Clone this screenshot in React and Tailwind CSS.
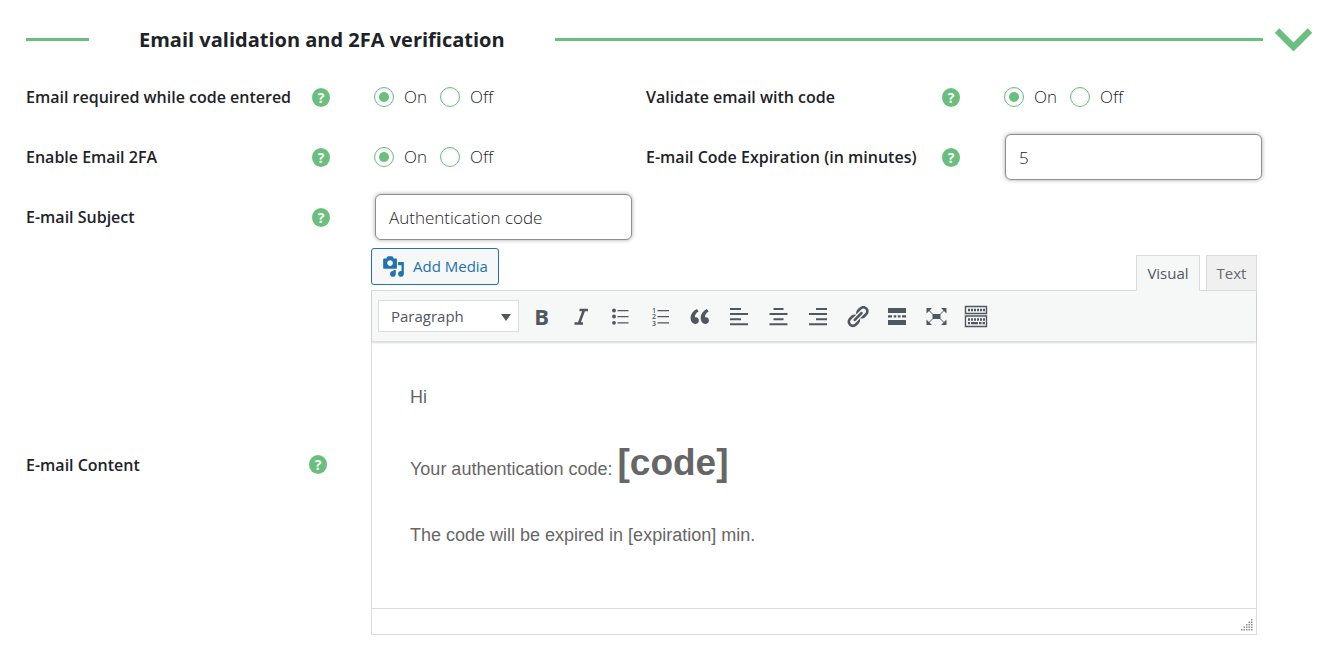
import React, { useState } from "react";

function HelpIcon() {
  return (
    <button type="button" aria-label="Help" className="shrink-0">
      <svg width="18" height="19" viewBox="0 0 18 19" aria-hidden="true">
        <ellipse cx="9" cy="9.5" rx="9" ry="9.5" fill="#6bbf7e" />
        <text x="9" y="14.5" textAnchor="middle" fontSize="14" fontWeight="700" fill="#fff">?</text>
      </svg>
    </button>
  );
}

function Field({ label, htmlFor, children }) {
  return (
    <div className="flex h-[60px] items-center gap-11">
      <div className="flex flex-1 items-center justify-between">
        <label htmlFor={htmlFor} className="text-base font-semibold whitespace-nowrap text-[#1d2327]">
          {label}
        </label>
        <HelpIcon />
      </div>
      <div className="w-[258px] shrink-0">{children}</div>
    </div>
  );
}

function OnOff({ name }) {
  const [value, setValue] = useState("On");

  return (
    <div role="radiogroup" className="flex gap-[13px]">
      {["On", "Off"].map((option) => (
        <label key={option} className="flex items-center gap-2.5 text-[17px] leading-5 font-light text-[#1d2327]">
          <input
            id={option === "On" ? name : undefined}
            type="radio"
            name={name}
            checked={value === option}
            onChange={() => setValue(option)}
            className="flex size-5 appearance-none items-center justify-center rounded-full border border-[#6bbf7e] bg-white shadow-[inset_0_1px_2px_rgba(0,0,0,0.1)] checked:before:size-2.5 checked:before:rounded-full checked:before:bg-[#6bbf7e]"
          />
          {option}
        </label>
      ))}
    </div>
  );
}

function TextBox({ id, defaultValue }) {
  return (
    <input
      id={id}
      type="text"
      defaultValue={defaultValue}
      className="ml-px block h-[46px] w-[257px] rounded-md border border-[#8c8f94] bg-white px-[13px] text-[17px] font-light text-[#1d2327] shadow-[0_0_4px_rgba(0,0,0,0.35)]"
    />
  );
}

function Icon({ children, viewBox = "0 0 25 25" }) {
  return (
    <svg width="25" height="25" viewBox={viewBox} fill="currentColor" aria-hidden="true">
      {children}
    </svg>
  );
}

const tools = [
  { label: "Bold", icon: <span className="text-[22px] leading-6 font-bold">B</span> },
  {
    label: "Italic",
    icon: (
      <Icon>
        <path d="M10.5 6h8.5M5.5 19.5h8.5M15 6l-5 13.5" fill="none" stroke="currentColor" strokeWidth="2.6" />
      </Icon>
    ),
  },
  {
    label: "Bulleted list",
    icon: (
      <Icon>
        <circle cx="6" cy="6.5" r="1.9" />
        <circle cx="6" cy="12.5" r="1.9" />
        <circle cx="6" cy="18.8" r="1.9" />
        <path d="M9.5 6h11v1.3h-11zM9.5 12h11v1.3h-11zM9.5 18.2h11v1.3h-11z" />
      </Icon>
    ),
  },
  {
    label: "Numbered list",
    icon: (
      <Icon>
        <g fontSize="7" fontWeight="600">
          <text x="4" y="8.5">1</text>
          <text x="4" y="15">2</text>
          <text x="4" y="21.5">3</text>
        </g>
        <path d="M9.5 6h11.5v1.3h-11.5zM9.5 12h11.5v1.3h-11.5zM9.5 18.2h11.5v1.3h-11.5z" />
      </Icon>
    ),
  },
  {
    label: "Blockquote",
    icon: (
      <Icon viewBox="0 0 20 20">
        <path d="M9.49 13.22c0-.74-.2-1.38-.61-1.9-.62-.78-1.83-.88-2.53-.72-.29-1.65 1.11-3.75 2.92-4.65L7.88 4c-2.73 1.3-5.42 4.28-4.96 8.05C3.21 14.43 4.59 16 6.54 16c.85 0 1.56-.25 2.12-.75s.83-1.18.83-2.03zm8.05 0c0-.74-.2-1.38-.61-1.9-.63-.78-1.83-.88-2.53-.72-.29-1.65 1.11-3.75 2.92-4.65L15.93 4c-2.73 1.3-5.41 4.28-4.95 8.05.29 2.38 1.66 3.95 3.61 3.95.85 0 1.56-.25 2.12-.75s.83-1.18.83-2.03z" />
      </Icon>
    ),
  },
  {
    label: "Align left",
    icon: (
      <Icon>
        <path d="M3 4h11v2H3zM3 9h18v2H3zM3 14.2h11v2H3zM3 19.2h18v2H3z" />
      </Icon>
    ),
  },
  {
    label: "Align center",
    icon: (
      <Icon>
        <path d="M7.5 4h10v2h-10zM3.5 9h18v2h-18zM7.5 14.2h10v2h-10zM3.5 19.2h18v2h-18z" />
      </Icon>
    ),
  },
  {
    label: "Align right",
    icon: (
      <Icon>
        <path d="M10 4h11v2H10zM3 9h18v2H3zM10 14.2h11v2H10zM3 19.2h18v2H3z" />
      </Icon>
    ),
  },
  {
    label: "Insert link",
    icon: (
      <Icon viewBox="0 0 20 20">
        <path d="M17.74 2.76c1.68 1.69 1.68 4.41 0 6.1l-1.53 1.52c-1.12 1.12-2.7 1.47-4.14 1.09l2.62-2.61.76-.77.76-.76c.84-.84.84-2.2 0-3.04-.84-.85-2.2-.85-3.04 0l-.77.76-3.38 3.38c-.37-1.44-.02-3.02 1.1-4.14l1.52-1.53c1.69-1.68 4.42-1.68 6.1 0zM8.59 13.43l5.34-5.34c.42-.42.42-1.1 0-1.52-.44-.43-1.13-.39-1.53 0l-5.33 5.34c-.42.42-.42 1.1 0 1.52.44.43 1.13.39 1.52 0zm-.76 2.29l4.14-4.15c.38 1.44.03 3.02-1.09 4.14l-1.52 1.53c-1.69 1.68-4.41 1.68-6.1 0-1.68-1.68-1.68-4.42 0-6.1l1.53-1.52c1.12-1.12 2.7-1.47 4.14-1.1l-4.14 4.15c-.85.84-.85 2.2 0 3.05.84.84 2.2.84 3.04 0z" />
      </Icon>
    ),
  },
  {
    label: "Insert Read More tag",
    icon: (
      <Icon>
        <path d="M3 4h18v5H3zM3 11.2h4v2.4H3zM8.7 11.2h2.6v2.4H8.7zM12.9 11.2h2.6v2.4h-2.6zM17 11.2h4v2.4h-4zM3 16h18v5H3z" />
      </Icon>
    ),
  },
  {
    label: "Distraction-free writing",
    icon: (
      <Icon>
        <path d="M8.5 10h8v5h-8z" />
        <path d="M2.5 4H8L2.5 9.5zM22.5 4H17l5.5 5.5zM2.5 21H8l-5.500-5.5zM22.5 21H17l5.5-5.5z" />
        <path d="M4 5.500l5 5M21 5.500l-5 5M4 19.500l5-5M21 19.500l-5-5" stroke="currentColor" strokeWidth="1" />
      </Icon>
    ),
  },
  {
    label: "Toolbar Toggle",
    icon: (
      <Icon>
        <path d="M1.5 2.5h21v7h-21zM1.5 12h21v10.500h-21z" fill="none" stroke="currentColor" strokeWidth="1.4" />
        <path d="M4 6h17M4 15.500h17" fill="none" stroke="currentColor" strokeWidth="2.4" strokeDasharray="2 1" />
        <path d="M4 18h2v2.200H4zM7 18h7v2.200H7zM15 18h2.500v2.200H15zM18.500 18H21v2.200h-2.500z" />
      </Icon>
    ),
  },
];

function Toolbar() {
  return (
    <div className="flex h-[51px] items-center border-b border-[#dcdcde] bg-[#f6f7f7] pl-1.5 shadow-[0_1px_2px_rgba(0,0,0,0.15)]">
      <div className="relative">
        <select
          aria-label="Block format"
          className="block h-8 w-[141px] appearance-none border border-[#dcdcde] bg-white pl-3 text-[15px] text-[#50575e]"
        >
          <option>Paragraph</option>
          <option>Heading 1</option>
          <option>Heading 2</option>
        </select>
        <svg width="10" height="7" viewBox="0 0 10 7" className="pointer-events-none absolute top-3.5 right-2 text-[#50575e]">
          <path d="M0 0h10L5 7z" fill="currentColor" />
        </svg>
      </div>
      <div className="ml-[3px] grid w-[474px] grid-cols-12">
        {tools.map((tool) => (
          <button
            key={tool.label}
            type="button"
            aria-label={tool.label}
            className="flex h-8 items-center justify-center text-[#50575e]"
          >
            {tool.icon}
          </button>
        ))}
      </div>
    </div>
  );
}

function Editor() {
  return (
    <div>
      <div className="flex items-start justify-between">
        <button
          type="button"
          className="flex h-[37px] items-center gap-2 rounded-[3px] border border-[#2271b1] bg-[#f6f7f7] px-2.5 text-[15px] text-[#2271b1]"
        >
          <svg width="23" height="23" viewBox="0 0 20 20" fill="currentColor" aria-hidden="true">
            <path d="M13 11V4c0-.55-.45-1-1-1h-1.67L9 1H5L3.67 3H2c-.55 0-1 .45-1 1v7c0 .55.45 1 1 1h10c.55 0 1-.45 1-1zM7 4.5c1.38 0 2.5 1.12 2.5 2.5S8.38 9.5 7 9.5 4.5 8.38 4.5 7 5.62 4.5 7 4.5zM14 6h5v10.5c0 1.38-1.12 2.5-2.5 2.5S14 17.88 14 16.5s1.12-2.5 2.5-2.5c.17 0 .34.02.5.05V9h-3V6zm-4 8.05V13h2v3.5c0 1.38-1.12 2.5-2.5 2.5S7 17.88 7 16.5 8.12 14 9.5 14c.17 0 .34.02.5.05z" />
          </svg>
          Add Media
        </button>
        <div className="mt-[7px] flex gap-1.5 text-[15px]">
          <button
            type="button"
            className="relative z-10 -mb-px h-9 w-16 border border-b-0 border-[#dcdcde] bg-[#f6f7f7] text-[#50575e]"
          >
            Visual
          </button>
          <button type="button" className="h-[35px] w-[51px] border border-b-0 border-[#dcdcde] bg-[#f0f0f1] text-[#646970]">
            Text
          </button>
        </div>
      </div>

      <div className="border border-[#dcdcde] bg-white">
        <Toolbar />
        <div
          id="email-content"
          role="textbox"
          aria-multiline="true"
          aria-label="E-mail Content"
          contentEditable
          suppressContentEditableWarning
          className="h-[266px] pt-[41px] pl-[38px] font-['Liberation_Sans',Arial,sans-serif] text-lg leading-7 text-[#666]"
        >
          <p>Hi</p>
          <p className="mt-7 leading-[48px]">
            Your authentication code: <strong className="text-[37px]">[code]</strong>
          </p>
          <p className="mt-7">The code will be expired in [expiration] min.</p>
        </div>
        <div className="flex h-[26px] items-end justify-end border-t border-[#dcdcde] p-[3px]">
          <svg width="12" height="12" viewBox="0 0 12 12" fill="#8c8f94" aria-hidden="true">
            <path d="M10 0h1.5v1.5H10zM7.5 2.5H9V4H7.5zM10 2.5h1.5V4H10zM5 5h1.5v1.5H5zM7.5 5H9v1.5H7.5zM10 5h1.5v1.5H10zM2.5 7.5H4V9H2.5zM5 7.5h1.5V9H5zM7.5 7.5H9V9H7.5zM10 7.5h1.5V9H10zM0 10h1.5v1.5H0zM2.5 10H4v1.5H2.5zM5 10h1.5v1.5H5zM7.5 10H9v1.5H7.5zM10 10h1.5v1.5H10z" />
          </svg>
        </div>
      </div>
    </div>
  );
}

export default function App() {
  return (
    <main className="bg-white font-['Open_Sans','Noto_Sans',sans-serif]">
      <header className="flex h-[67px] items-center pt-3 pr-[18px] pl-[26px]">
        <span className="h-[3px] w-[63px] bg-[#6bbf7e]" />
        <h2 className="mx-12 px-0.5 text-xl font-bold whitespace-nowrap text-[#1d2327]">
          Email validation and 2FA verification
        </h2>
        <span className="h-[3px] flex-1 bg-[#6bbf7e]" />
        <button type="button" aria-label="Toggle section" className="ml-3">
          <svg width="37" height="24" viewBox="0 0 37 24" className="text-[#6bbf7e]">
            <path d="M2 2.5L18.5 19L35 2.5" fill="none" stroke="currentColor" strokeWidth="6.4" />
          </svg>
        </button>
      </header>

      <form className="pr-[68px] pl-[26px]">
        <div className="grid grid-cols-[606fr_616fr] gap-x-3.5">
          <Field label="Email required while code entered" htmlFor="email-required">
            <OnOff name="email-required" />
          </Field>
          <Field label="Validate email with code" htmlFor="validate-email">
            <OnOff name="validate-email" />
          </Field>
          <Field label="Enable Email 2FA" htmlFor="enable-2fa">
            <OnOff name="enable-2fa" />
          </Field>
          <Field label="E-mail Code Expiration (in minutes)" htmlFor="code-expiration">
            <TextBox id="code-expiration" defaultValue="5" />
          </Field>
          <Field label="E-mail Subject" htmlFor="email-subject">
            <TextBox id="email-subject" defaultValue="Authentication code" />
          </Field>
        </div>

        <div className="mt-px flex items-center gap-11 pr-[5px]">
          <div className="flex w-[301px] shrink-0 items-center justify-between pt-[46px]">
            <span className="text-base font-semibold text-[#1d2327]">E-mail Content</span>
            <HelpIcon />
          </div>
          <div className="min-w-0 flex-1">
            <Editor />
          </div>
        </div>
      </form>
    </main>
  );
}
